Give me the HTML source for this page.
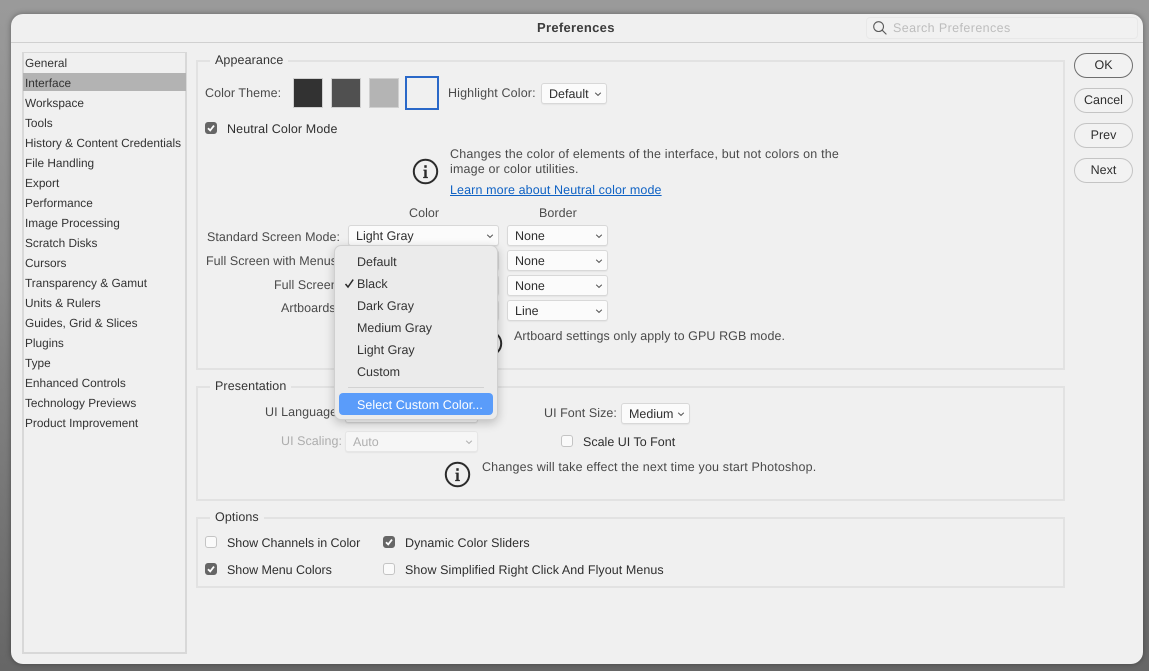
<!DOCTYPE html>
<html><head><meta charset="utf-8">
<style>
html,body{margin:0;padding:0}
body{width:1149px;height:671px;overflow:hidden;position:relative;background:linear-gradient(180deg,#9a9a9a 0,#8c8c8c 40%,#666 100%);font-family:"Liberation Sans",sans-serif;font-size:12.5px;letter-spacing:0;color:#333;text-rendering:geometricPrecision;filter:blur(.25px)}
.a,.t{position:absolute}
.t{white-space:nowrap;line-height:16px;color:#4a4a4a;letter-spacing:.05px}
.d{color:#2e2e2e}
.n{letter-spacing:.17px}
#win{position:absolute;left:11px;top:14px;width:1132px;height:650px;background:#f0f0f0;border-radius:12px;box-shadow:0 0 6px rgba(0,0,0,.35)}
.grp{position:absolute;border:2px solid #e2e2e2;box-sizing:border-box}
.lg{position:absolute;background:#f0f0f0;padding:0 5px;line-height:16px;color:#333;white-space:nowrap;letter-spacing:.1px}
.li{position:absolute;left:25px;color:#333;line-height:16px;white-space:nowrap;font-size:11.85px}
.sel{position:absolute;box-sizing:border-box;height:21px;background:#fbfbfb;border:1px solid #d8d8d8;border-radius:3px;line-height:20px;padding-left:7px;color:#2e2e2e;box-shadow:0 1px 1px rgba(0,0,0,.05)}
.sel svg{position:absolute;right:3px;top:7px}
.sw{position:absolute;top:78px;width:30px;height:30px;box-sizing:border-box;border:1px solid #d0d0d0}
.cb{position:absolute;width:12px;height:12px;box-sizing:border-box;border-radius:3px;border:1px solid #c4c4c4;background:#fafafa}
.cb.on{background:#666;border-color:#666}
.cb svg{position:absolute;left:0;top:0}
.btn{position:absolute;left:1074px;width:59px;height:25px;box-sizing:border-box;border:1px solid #c4c4c4;border-radius:13px;text-align:center;line-height:23px;color:#2e2e2e;background:#f2f2f2}
.m{position:absolute;left:357px;line-height:16px;color:#333;white-space:nowrap}
</style></head><body>
<div id="win"></div>
<div class="a" style="left:11px;top:42px;width:1132px;height:1px;background:#d0d0d0"></div>
<div class="t" style="left:537px;top:20px;font-weight:bold;font-size:13px;color:#3c3c3c;letter-spacing:.3px">Preferences</div>
<div class="a" style="left:866px;top:17px;width:272px;height:22px;box-sizing:border-box;border:1px solid #e8e8e8;border-radius:4px;background:#f1f1f1"></div>
<svg class="a" style="left:872px;top:20px" width="16" height="16" viewBox="0 0 16 16" fill="none" stroke="#5a5a5a" stroke-width="1.1"><circle cx="6.6" cy="6.6" r="4.9"/><path d="M10.2 10.2L14.4 14.4"/></svg>
<div class="t" style="left:893px;top:20px;color:#bdbdbd;letter-spacing:.4px">Search Preferences</div>

<div class="a" style="left:22px;top:52px;width:165px;height:602px;box-sizing:border-box;border:2px solid #d8d8d8;border-top-width:1px"></div>
<div class="a" style="left:23px;top:73px;width:163px;height:18px;background:#b3b3b3"></div>
<div class="li" style="top:55px">General</div>
<div class="li" style="top:75px">Interface</div>
<div class="li" style="top:95px">Workspace</div>
<div class="li" style="top:115px">Tools</div>
<div class="li" style="top:135px">History &amp; Content Credentials</div>
<div class="li" style="top:155px">File Handling</div>
<div class="li" style="top:175px">Export</div>
<div class="li" style="top:195px">Performance</div>
<div class="li" style="top:215px">Image Processing</div>
<div class="li" style="top:235px">Scratch Disks</div>
<div class="li" style="top:255px">Cursors</div>
<div class="li" style="top:275px">Transparency &amp; Gamut</div>
<div class="li" style="top:295px">Units &amp; Rulers</div>
<div class="li" style="top:315px">Guides, Grid &amp; Slices</div>
<div class="li" style="top:335px">Plugins</div>
<div class="li" style="top:355px">Type</div>
<div class="li" style="top:375px">Enhanced Controls</div>
<div class="li" style="top:395px">Technology Previews</div>
<div class="li" style="top:415px">Product Improvement</div>

<div class="grp" style="left:196px;top:60px;width:869px;height:310px"></div>
<div class="lg" style="left:210px;top:52px">Appearance</div>
<div class="grp" style="left:196px;top:386px;width:869px;height:115px"></div>
<div class="lg" style="left:210px;top:378px">Presentation</div>
<div class="grp" style="left:196px;top:517px;width:869px;height:71px"></div>
<div class="lg" style="left:210px;top:509px">Options</div>

<div class="t" style="left:205px;top:85px">Color Theme:</div>
<div class="sw" style="left:293px;background:#323232"></div>
<div class="sw" style="left:331px;background:#505050"></div>
<div class="sw" style="left:369px;background:#b4b4b4"></div>
<div class="a" style="left:405px;top:76px;width:34px;height:34px;box-sizing:border-box;border:2px solid #2a68c8;background:#f0f0f0"></div>
<div class="t" style="left:448px;top:85px;letter-spacing:.14px">Highlight Color:</div>
<div class="sel" style="left:541px;top:83px;width:66px">Default<svg width="10" height="6" viewBox="0 0 10 6" fill="none" stroke="#555" stroke-width="1"><path d="M2.2 1.8L5 4.4L7.8 1.8"/></svg></div>

<div class="cb on" style="left:205px;top:122px"><svg width="10" height="10" viewBox="0 0 10 10" fill="none" stroke="#fff" stroke-width="1.8"><path d="M2 5.2L4.2 7.4L8 2.6"/></svg></div>
<div class="t d" style="left:227px;top:121px;letter-spacing:.12px">Neutral Color Mode</div>

<svg class="a" style="left:412px;top:158px" width="27" height="27" viewBox="0 0 27 27"><circle cx="13.5" cy="13.5" r="11.7" fill="none" stroke="#2b2b2b" stroke-width="2"/><path d="M11.4 11.6H14.7V18.9H15.9V20.1H11.1V18.9H12.3V12.8H11.4Z" fill="#2b2b2b"/><rect x="12.3" y="7.2" width="2.4" height="2.6" fill="#2b2b2b"/></svg>
<div class="t n" style="left:450px;top:146px;letter-spacing:.19px">Changes the color of elements of the interface, but not colors on the</div>
<div class="t n" style="left:450px;top:161px">image or color utilities.</div>
<div class="t" style="left:450px;top:182px;color:#0f62c4;text-decoration:underline;letter-spacing:.11px">Learn more about Neutral color mode</div>

<div class="t" style="left:409px;top:205px">Color</div>
<div class="t" style="left:539px;top:205px">Border</div>

<div class="t" style="left:207px;top:229px">Standard Screen Mode:</div>
<div class="t" style="left:206px;top:253px">Full Screen with Menus:</div>
<div class="t" style="left:274px;top:277px">Full Screen:</div>
<div class="t" style="left:281px;top:300px">Artboards:</div>

<div class="sel" style="left:348px;top:225px;width:151px">Light Gray<svg width="10" height="6" viewBox="0 0 10 6" fill="none" stroke="#555" stroke-width="1"><path d="M2.2 1.8L5 4.4L7.8 1.8"/></svg></div>
<div class="sel" style="left:348px;top:250px;width:151px"></div>
<div class="sel" style="left:348px;top:275px;width:151px"></div>
<div class="sel" style="left:348px;top:300px;width:151px"></div>
<div class="sel" style="left:507px;top:225px;width:101px">None<svg width="10" height="6" viewBox="0 0 10 6" fill="none" stroke="#555" stroke-width="1"><path d="M2.2 1.8L5 4.4L7.8 1.8"/></svg></div>
<div class="sel" style="left:507px;top:250px;width:101px">None<svg width="10" height="6" viewBox="0 0 10 6" fill="none" stroke="#555" stroke-width="1"><path d="M2.2 1.8L5 4.4L7.8 1.8"/></svg></div>
<div class="sel" style="left:507px;top:275px;width:101px">None<svg width="10" height="6" viewBox="0 0 10 6" fill="none" stroke="#555" stroke-width="1"><path d="M2.2 1.8L5 4.4L7.8 1.8"/></svg></div>
<div class="sel" style="left:507px;top:300px;width:101px">Line<svg width="10" height="6" viewBox="0 0 10 6" fill="none" stroke="#555" stroke-width="1"><path d="M2.2 1.8L5 4.4L7.8 1.8"/></svg></div>

<svg class="a" style="left:476px;top:330px" width="27" height="27" viewBox="0 0 27 27"><circle cx="13.5" cy="13.5" r="11.7" fill="none" stroke="#2b2b2b" stroke-width="2"/></svg>
<div class="t" style="left:514px;top:328px;letter-spacing:.08px">Artboard settings only apply to GPU RGB mode.</div>

<div class="t" style="left:265px;top:404px">UI Language:</div>
<div class="sel" style="left:345px;top:402px;width:133px"></div>
<div class="t" style="left:281px;top:433px;color:#adadad">UI Scaling:</div>
<div class="sel" style="left:345px;top:431px;width:133px;background:#f6f6f6;border-color:#e6e6e6;color:#b0b0b0">Auto<svg width="10" height="6" viewBox="0 0 10 6" fill="none" stroke="#b0b0b0" stroke-width="1"><path d="M2.2 1.8L5 4.4L7.8 1.8"/></svg></div>
<div class="t" style="left:544px;top:405px">UI Font Size:</div>
<div class="sel" style="left:621px;top:403px;width:69px">Medium<svg width="10" height="6" viewBox="0 0 10 6" fill="none" stroke="#555" stroke-width="1"><path d="M2.2 1.8L5 4.4L7.8 1.8"/></svg></div>
<div class="cb" style="left:561px;top:435px"></div>
<div class="t d" style="left:583px;top:434px;letter-spacing:0">Scale UI To Font</div>
<svg class="a" style="left:444px;top:461px" width="27" height="27" viewBox="0 0 27 27"><circle cx="13.5" cy="13.5" r="11.7" fill="none" stroke="#2b2b2b" stroke-width="2"/><path d="M11.4 11.6H14.7V18.9H15.9V20.1H11.1V18.9H12.3V12.8H11.4Z" fill="#2b2b2b"/><rect x="12.3" y="7.2" width="2.4" height="2.6" fill="#2b2b2b"/></svg>
<div class="t" style="left:482px;top:459px;letter-spacing:.16px">Changes will take effect the next time you start Photoshop.</div>

<div class="cb" style="left:205px;top:536px"></div>
<div class="t d" style="left:227px;top:535px;letter-spacing:-.04px">Show Channels in Color</div>
<div class="cb on" style="left:383px;top:536px"><svg width="10" height="10" viewBox="0 0 10 10" fill="none" stroke="#fff" stroke-width="1.8"><path d="M2 5.2L4.2 7.4L8 2.6"/></svg></div>
<div class="t d" style="left:405px;top:535px;letter-spacing:.05px">Dynamic Color Sliders</div>
<div class="cb on" style="left:205px;top:563px"><svg width="10" height="10" viewBox="0 0 10 10" fill="none" stroke="#fff" stroke-width="1.8"><path d="M2 5.2L4.2 7.4L8 2.6"/></svg></div>
<div class="t d" style="left:227px;top:562px;letter-spacing:-.05px">Show Menu Colors</div>
<div class="cb" style="left:383px;top:563px"></div>
<div class="t d" style="left:405px;top:562px;letter-spacing:.07px">Show Simplified Right Click And Flyout Menus</div>

<div class="btn" style="top:53px;border-color:#6e6e6e">OK</div>
<div class="btn" style="top:88px">Cancel</div>
<div class="btn" style="top:123px">Prev</div>
<div class="btn" style="top:158px">Next</div>

<div class="a" style="left:334px;top:245px;width:164px;height:175px;box-sizing:border-box;background:#ebebeb;border:1px solid #cfcfcf;border-radius:7px;box-shadow:0 3px 10px rgba(0,0,0,.22)"></div>
<div class="m" style="top:254px">Default</div>
<svg class="a" style="left:344px;top:278px" width="11" height="11" viewBox="0 0 11 11" fill="none" stroke="#2a2a2a" stroke-width="1.5"><path d="M1.5 6L4 9L9.2 1.6"/></svg>
<div class="m" style="top:276px">Black</div>
<div class="m" style="top:298px">Dark Gray</div>
<div class="m" style="top:320px">Medium Gray</div>
<div class="m" style="top:342px">Light Gray</div>
<div class="m" style="top:364px">Custom</div>
<div class="a" style="left:348px;top:387px;width:136px;height:1px;background:#d2d2d2"></div>
<div class="a" style="left:339px;top:393px;width:154px;height:22px;background:#5a9cfa;border-radius:4px"></div>
<div class="m" style="top:397px;color:#fff;letter-spacing:.07px">Select Custom Color...</div>
</body></html>
